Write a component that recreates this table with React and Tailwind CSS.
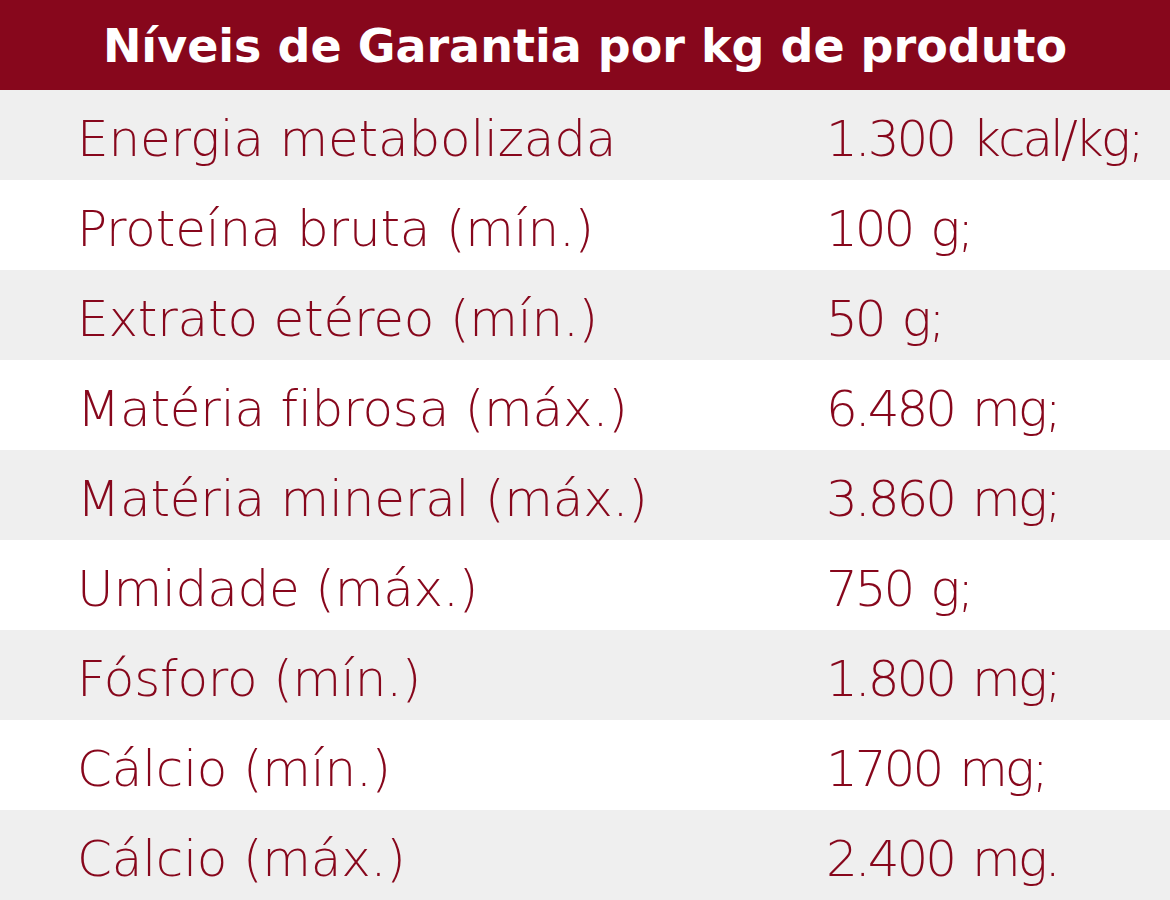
const rows = [
  ['Energia metabolizada', '1.300 kcal/kg;'],
  ['Proteína bruta (mín.)', '100 g;'],
  ['Extrato etéreo (mín.)', '50 g;'],
  ['Matéria fibrosa (máx.)', '6.480 mg;'],
  ['Matéria mineral (máx.)', '3.860 mg;'],
  ['Umidade (máx.)', '750 g;'],
  ['Fósforo (mín.)', '1.800 mg;'],
  ['Cálcio (mín.)', '1700 mg;'],
  ['Cálcio (máx.)', '2.400 mg.'],
]

export default function App() {
  return (
    <div className="w-[1170px] h-[900px] bg-white font-['DejaVu_Sans',sans-serif]">
      <div className="h-[90px] bg-[#87071c] flex items-center justify-center pt-[2px]">
        <h1 className="text-white font-bold text-[46px] leading-none whitespace-nowrap">Níveis de Garantia por kg de produto</h1>
      </div>
      {rows.map(([label, value], i) => (
        <div
          key={label}
          className={`h-[90px] flex items-center text-[#87071c] text-[50px] font-light leading-none pt-[8px] whitespace-nowrap ${i % 2 === 0 ? 'bg-[#efefef]' : 'bg-white'}`}
        >
          <div className="w-[826px] shrink-0 pl-[77px] tracking-[-0.2px]">{label}</div>
          <div className="tracking-[-3px] [word-spacing:5px]">{value}</div>
        </div>
      ))}
    </div>
  )
}
